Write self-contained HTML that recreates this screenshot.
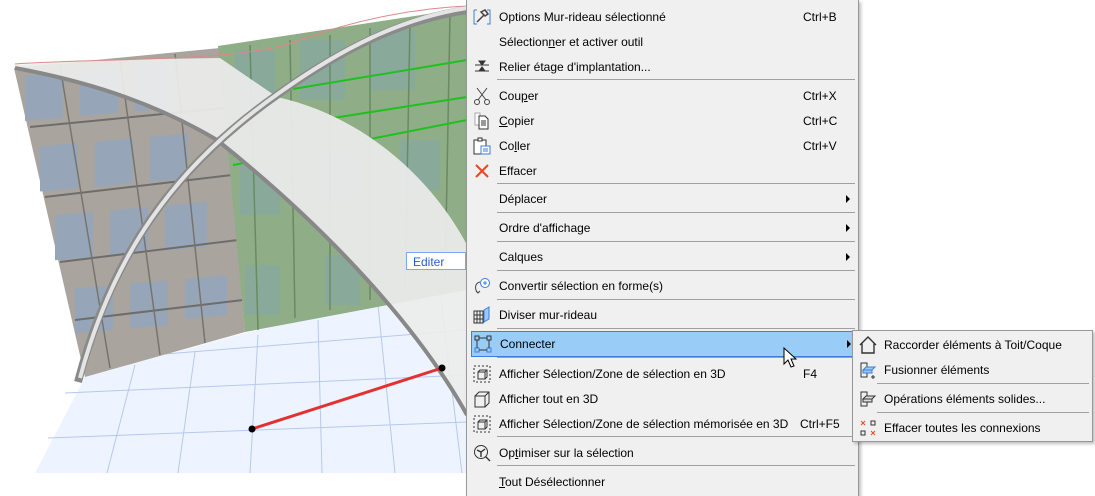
<!DOCTYPE html>
<html><head><meta charset="utf-8"><style>
*{margin:0;padding:0;box-sizing:border-box}
body{width:1095px;height:496px;background:#fff;position:relative;overflow:hidden;font-family:"Liberation Sans",sans-serif;font-size:12px;color:#000}
.menu{position:absolute;left:466px;top:0;width:393px;height:496px;background:#f0f0f0;border-left:1px solid #979797;border-right:1px solid #979797;box-shadow:2px 2px 3px rgba(0,0,0,.25)}
.it{position:absolute;left:0;right:0;height:24px;line-height:24px}
.it .t{position:absolute;left:32px}
.it .k{position:absolute;left:336px}
.it .a{position:absolute;left:379px;top:8px;width:0;height:0;border-left:4px solid #000;border-top:4px solid transparent;border-bottom:4px solid transparent}
.it .i{position:absolute;left:6px;top:3px;width:18px;height:18px}
.sep{position:absolute;left:30px;right:3px;height:1px;background:#a0a0a0}
.hl{background:#99ccf7;border:1px solid #3d7fd6;left:4px;right:2px}
.sub{position:absolute;left:852px;top:330px;width:241px;height:112px;background:#f0f0f0;border:1px solid #979797;box-shadow:2px 2px 3px rgba(0,0,0,.25)}
.sub .t{left:31px}
.sub .sep{left:24px}
u{text-decoration:underline}
</style></head><body>
<svg width="470" height="496" style="position:absolute;left:0;top:0">
<polygon points="35,473 467,473 467,285 245,333 85,377" fill="#eef4ff"/>
<g stroke="#b5c8f0" stroke-width="1" fill="none">
<line x1="48" y1="438" x2="467" y2="422"/><line x1="65" y1="393" x2="467" y2="375"/><line x1="90" y1="360" x2="467" y2="330"/>
<line x1="107" y1="473" x2="135" y2="365"/><line x1="178" y1="473" x2="195" y2="352"/><line x1="250" y1="473" x2="258" y2="335"/><line x1="322" y1="473" x2="318" y2="320"/><line x1="395" y1="473" x2="378" y2="305"/><line x1="462" y1="473" x2="440" y2="292"/>
</g>
<polygon points="14,68 220,48 245,332 85,377" fill="#aaa49e"/>
<g fill="#96a6b8">
<rect x="25" y="78" width="38" height="45" transform="skewY(-5)"/><rect x="80" y="78" width="38" height="45" transform="skewY(-5)"/><rect x="135" y="78" width="38" height="45" transform="skewY(-5)"/>
<rect x="40" y="150" width="38" height="45" transform="skewY(-5)"/><rect x="95" y="150" width="38" height="45" transform="skewY(-5)"/><rect x="150" y="150" width="38" height="45" transform="skewY(-5)"/>
<rect x="55" y="220" width="38" height="45" transform="skewY(-5)"/><rect x="110" y="220" width="38" height="45" transform="skewY(-5)"/><rect x="165" y="220" width="42" height="45" transform="skewY(-5)"/>
<rect x="75" y="295" width="38" height="45" transform="skewY(-5)"/><rect x="130" y="295" width="38" height="45" transform="skewY(-5)"/><rect x="185" y="295" width="42" height="40" transform="skewY(-5)"/>
</g>
<g stroke="#6f6d6b" stroke-width="2"><line x1="30" y1="127" x2="225" y2="108"/><line x1="45" y1="197" x2="232" y2="175"/><line x1="60" y1="262" x2="238" y2="240"/><line x1="75" y1="320" x2="243" y2="300"/></g>
<g stroke="#77746f" stroke-width="1.5"><line x1="60" y1="66" x2="110" y2="368"/><line x1="120" y1="60" x2="160" y2="355"/><line x1="175" y1="54" x2="205" y2="343"/></g>
<polygon points="218,46 467,8 467,290 245,332" fill="#8fad86"/>
<g fill="#89aa9a"><rect x="235" y="50" width="40" height="60"/><rect x="300" y="40" width="45" height="60"/><rect x="370" y="30" width="45" height="60"/><rect x="240" y="165" width="40" height="50"/><rect x="320" y="150" width="40" height="50"/><rect x="400" y="140" width="40" height="50"/><rect x="245" y="265" width="35" height="50"/><rect x="325" y="255" width="35" height="50"/></g>
<g stroke="#6a8a64" stroke-width="1.5"><line x1="250" y1="45" x2="258" y2="330"/><line x1="290" y1="40" x2="295" y2="318"/><line x1="330" y1="35" x2="330" y2="310"/><line x1="370" y1="28" x2="370" y2="300"/><line x1="410" y1="22" x2="405" y2="292"/><line x1="450" y1="14" x2="445" y2="285"/></g>
<g stroke="#1ec21e" stroke-width="2"><line x1="293" y1="89" x2="467" y2="60"/><line x1="333" y1="118" x2="467" y2="97"/><line x1="365" y1="140" x2="467" y2="120"/><line x1="233" y1="165" x2="255" y2="161"/></g>
<path d="M15,65 L100,60 L220,58 L277,97 C360,115 430,175 467,245 L467,415 C420,330 330,230 217,140 C150,100 80,80 15,70 Z" fill="#ececec" opacity=".93"/>
<path d="M15,64 C100,58 250,62 300,40 C360,18 420,8 467,6" stroke="#d88" stroke-width="1" fill="none"/>
<path d="M15,68 C80,80 150,100 217,140 C330,230 420,330 467,415" stroke="#888" stroke-width="4" fill="none"/>
<path d="M78,382 C110,260 170,170 277,95 C340,50 400,20 467,10" stroke="#8a8a8a" stroke-width="8" fill="none"/>
<path d="M80,378 C112,258 172,168 279,93 C342,48 402,18 467,8" stroke="#e4e4e4" stroke-width="4" fill="none"/>
<line x1="252" y1="429" x2="442" y2="368" stroke="#e53030" stroke-width="3"/>
<circle cx="252" cy="429" r="3.5"/><circle cx="442" cy="368" r="3.5"/>
<rect x="406.5" y="252.5" width="59" height="17" fill="#fff" stroke="#7fa7f0"/>
<text x="413" y="266" font-size="12" fill="#2a5ad8" font-family="Liberation Sans">Editer</text>
</svg>
<div class="menu">
<div class="it" style="top:5px"><svg class="i" viewBox="0 0 18 18"><path d="M1 2h3M1 2v14h3M14 2h3v14h-3" stroke="#3a7fd8" fill="none"/><path d="M4 14l7-7M8 4l4-2 3 4-3 2z" stroke="#444" fill="none" stroke-width="1.5"/></svg><span class="t">Options Mur-rideau sélectionné</span><span class="k">Ctrl+B</span></div>
<div class="it" style="top:30px"><span class="t">Sélection<u>n</u>er et activer outil</span></div>
<div class="it" style="top:55px"><svg class="i" viewBox="0 0 18 18"><path d="M2 7h14M2 13h14M6 3h6l-3 4zM6 13h6l-3-4z" stroke="#333" fill="#333"/></svg><span class="t">Relier étage d'implantation...</span></div>
<div class="sep" style="top:79px"></div>
<div class="it" style="top:84px"><svg class="i" viewBox="0 0 18 18"><path d="M4 1l9 12M14 1L5 13" stroke="#444" fill="none"/><circle cx="4" cy="15" r="2.5" stroke="#444" fill="none"/><circle cx="14" cy="15" r="2.5" stroke="#444" fill="none"/></svg><span class="t">Cou<u>p</u>er</span><span class="k">Ctrl+X</span></div>
<div class="it" style="top:109px"><svg class="i" viewBox="0 0 18 18"><path d="M2 1h5v12H2z" stroke="#aaa" fill="#fff"/><path d="M6 4h6l3 3v10H6z" stroke="#333" fill="#fff"/><path d="M8 9h5M8 11h5M8 13h5" stroke="#333"/></svg><span class="t"><u>C</u>opier</span><span class="k">Ctrl+C</span></div>
<div class="it" style="top:134px"><svg class="i" viewBox="0 0 18 18"><path d="M1 3h12v14H1z" stroke="#333" fill="#fff"/><path d="M5 1h4v3H5z" stroke="#333" fill="#fff"/><path d="M8 9h9v8H8z" stroke="#3a7fd8" fill="#fff"/><path d="M10 12h5M10 14h5" stroke="#3a7fd8"/></svg><span class="t">Co<u>l</u>ler</span><span class="k">Ctrl+V</span></div>
<div class="it" style="top:159px"><svg class="i" viewBox="0 0 18 18"><path d="M3 3l12 12M15 3L3 15" stroke="#ee4422" stroke-width="2"/></svg><span class="t">Effacer</span></div>
<div class="sep" style="top:183px"></div>
<div class="it" style="top:187px"><span class="t">Déplacer</span><span class="a"></span></div>
<div class="sep" style="top:212px"></div>
<div class="it" style="top:216px"><span class="t">Ordre d'affichage</span><span class="a"></span></div>
<div class="sep" style="top:241px"></div>
<div class="it" style="top:245px"><span class="t">Calques</span><span class="a"></span></div>
<div class="sep" style="top:270px"></div>
<div class="it" style="top:274px"><svg class="i" viewBox="0 0 18 18"><circle cx="12" cy="6" r="4.5" stroke="#3a7fd8" fill="#fff"/><path d="M12 4v4M10 6h4" stroke="#3a7fd8"/><path d="M7 5C2 6 1 12 5 16M3 14l2 2 2-2" stroke="#444" fill="none"/></svg><span class="t">Convertir sélection en forme(s)</span></div>
<div class="sep" style="top:299px"></div>
<div class="it" style="top:303px"><svg class="i" viewBox="0 0 18 18"><path d="M1 5h9v12H1zM4 5v12M7 5v12M1 9h9M1 13h9" stroke="#333" fill="none"/><path d="M11 4l5-3v12l-5 3z" stroke="#3a7fd8" fill="#9cc8f5"/></svg><span class="t">Diviser mur-rideau</span></div>
<div class="sep" style="top:328px"></div>
<div class="it hl" style="top:331px;height:26px"><svg class="i" style="left:2px" viewBox="0 0 18 18"><rect x="1" y="1" width="4" height="4" stroke="#333" fill="none"/><rect x="13" y="1" width="4" height="4" stroke="#333" fill="none"/><rect x="1" y="13" width="4" height="4" stroke="#3a7fd8" fill="none"/><rect x="13" y="13" width="4" height="4" stroke="#3a7fd8" fill="none"/><path d="M5 3h8M3 5v8M15 5v8M5 15h8" stroke="#333"/></svg><span class="t" style="left:28px">Connecter</span><span class="a" style="left:375px"></span></div>
<div class="sep" style="top:357px"></div>
<div class="it" style="top:362px"><svg class="i" viewBox="0 0 18 18"><rect x="1" y="1" width="16" height="16" stroke="#333" fill="none" stroke-dasharray="2 2"/><path d="M5 7h7v7H5zM5 7l2-2h7v7l-2 2M12 7l2-2" stroke="#333" fill="none"/></svg><span class="t">Afficher Sélection/Zone de sélection en 3D</span><span class="k">F4</span></div>
<div class="it" style="top:387px"><svg class="i" viewBox="0 0 18 18"><path d="M2 6h10v11H2zM2 6l4-4h10v11l-4 4M12 6l4-4" stroke="#333" fill="none"/></svg><span class="t">Afficher tout en 3D</span></div>
<div class="it" style="top:412px"><svg class="i" viewBox="0 0 18 18"><rect x="1" y="1" width="16" height="16" stroke="#333" fill="none" stroke-dasharray="2 2"/><path d="M5 7h7v7H5zM5 7l2-2h7v7l-2 2M12 7l2-2" stroke="#333" fill="none"/></svg><span class="t">Afficher Sélection/Zone de sélection mémorisée en 3D</span><span class="k" style="left:333px">Ctrl+F5</span></div>
<div class="sep" style="top:436px"></div>
<div class="it" style="top:441px"><svg class="i" viewBox="0 0 18 18"><circle cx="8" cy="8" r="6.5" stroke="#333" fill="none"/><path d="M12.5 12.5L17 17M4 6l4 2 4-3M8 8v5" stroke="#333" fill="none" stroke-width="1.4"/></svg><span class="t">Op<u>t</u>imiser sur la sélection</span></div>
<div class="sep" style="top:465px"></div>
<div class="it" style="top:470px"><span class="t"><u>T</u>out Désélectionner</span></div>
</div>
<div class="sub">
<div class="it" style="top:2px"><svg class="i" viewBox="0 0 18 18"><path d="M1 9L9 1l8 8M3 7v10h12V7" stroke="#333" fill="none" stroke-width="1.4"/></svg><span class="t">Raccorder éléments à Toit/Coque</span></div>
<div class="it" style="top:27px"><svg class="i" viewBox="0 0 18 18"><path d="M2 2h6v14H2z" stroke="#333" fill="none"/><path d="M4 9h9l3-3H7z M4 9v3h9V9" stroke="#3a7fd8" fill="#9cc8f5"/><path d="M14 14v4M12 16h4" stroke="#333"/></svg><span class="t">Fusionner éléments</span></div>
<div class="sep" style="top:52px"></div>
<div class="it" style="top:56px"><svg class="i" viewBox="0 0 18 18"><path d="M2 2h6v14H2z" stroke="#333" fill="none"/><path d="M4 9h9l3-3H7z M4 9v3h9V9" stroke="#333" fill="#ddd"/></svg><span class="t">Opérations éléments solides...</span></div>
<div class="sep" style="top:81px"></div>
<div class="it" style="top:85px"><svg class="i" viewBox="0 0 18 18"><path d="M2 2l4 4M6 2L2 6M12 12l4 4M16 12l-4 4" stroke="#ee4422"/><rect x="12" y="2" width="4" height="4" stroke="#333" fill="none"/><rect x="2" y="12" width="4" height="4" stroke="#333" fill="none"/></svg><span class="t">Effacer toutes les connexions</span></div>
</div>
<svg width="14" height="22" style="position:absolute;left:783px;top:347px" viewBox="0 0 14 22"><path d="M1 1v16l4-4 3 7 3-1-3-7h5z" fill="#fff" stroke="#000"/></svg>
</body></html>
